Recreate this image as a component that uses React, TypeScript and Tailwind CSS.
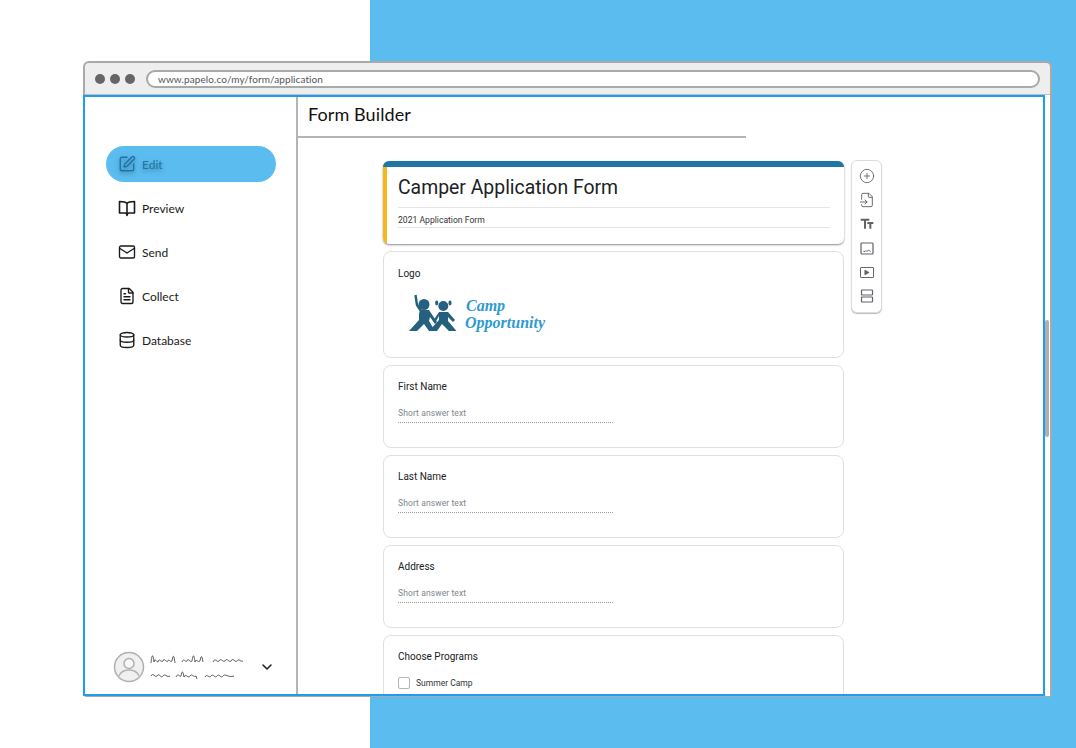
import { ChevronDown, CirclePlus, Database, FileInput, FileText, Mail, Play, SquarePen } from "lucide-react";
import { MdTextFields } from "react-icons/md";

const hand = "font-['Lato','Noto_Sans',sans-serif]";

function BookIcon() {
  return (
    <svg width="18" height="18" viewBox="0 0 18 18" fill="none" stroke="currentColor" strokeWidth="1.6" strokeLinejoin="round">
      <path d="M9 4.500C8 3 6 2.500 1.500 2.500V14H7c1 0 2 .6 2 2.500 0-1.900 1-2.500 2-2.500h5.500V2.500C12 2.500 10 3 9 4.500ZM9 4.500V16.500" />
    </svg>
  );
}

const navItems = [
  { label: "Preview", icon: <BookIcon /> },
  { label: "Send", icon: <Mail size={18} strokeWidth={1.8} /> },
  { label: "Collect", icon: <FileText size={18} strokeWidth={1.8} /> },
  { label: "Database", icon: <Database size={18} strokeWidth={1.8} /> },
];

function Scribble({ d, w }: { d: string; w: number }) {
  return (
    <svg width={w} height="14" viewBox={`0 0 ${w} 14`} fill="none" stroke="#333" strokeWidth="0.8">
      <path d={d} />
    </svg>
  );
}

function Sidebar() {
  return (
    <aside className="w-[213px] shrink-0 border-r-2 border-[#b4b4b4] flex flex-col">
      <nav className="pt-[49px] pl-[21px] pr-[20px] flex flex-col gap-2">
        <div className="h-[36px] rounded-[18px] bg-[#5bbdef] flex items-center pl-[12px] gap-[6px] text-[#2372a0]">
          <SquarePen size={18} strokeWidth={1.8} className="drop-shadow-[0_2px_2px_rgba(20,80,120,0.6)]" />
          <span className={`${hand} text-[12px] pt-[2px] drop-shadow-[0_2px_2px_rgba(20,80,120,0.6)]`}>Edit</span>
        </div>
        {navItems.map(({ label, icon }) => (
          <div key={label} className="h-[36px] flex items-center pl-[12px] gap-[6px] text-[#1a1a1a]">
            {icon}
            <span className={`${hand} text-[12px] pt-[2px]`}>{label}</span>
          </div>
        ))}
      </nav>
      <div className="mt-auto pb-[11px] pl-[28px] flex items-center">
        <svg width="32" height="32" viewBox="0 0 32 32" fill="none">
          <circle cx="16" cy="16" r="14.500" fill="#f0f0f0" stroke="#b0b0b0" strokeWidth="1.500" />
          <circle cx="16" cy="12.500" r="5" fill="#f8f8f8" stroke="#b0b0b0" strokeWidth="1.500" />
          <path d="M6 25c2-5 6-6 10-6s8 1 10 6" stroke="#b0b0b0" strokeWidth="1.500" />
        </svg>
        <div className="ml-[5px] w-[96px] flex flex-col gap-[1px]">
          <Scribble w={96} d="M1 10 C2 0 3 1 4 9 C5 4 6 9 8 9 C9 4 11 10 13 8 C14 4 16 10 18 8 C19 5 20 10 22 8 C23 1 24 2 25 10 M32 9 C34 4 35 10 37 8 C38 4 40 10 42 8 C43 1 44 1 45 9 C46 5 48 10 50 8 C51 2 52 2 53 9 M63 9 C65 4 67 10 69 8 C71 4 73 10 75 8 C77 4 79 10 81 8 C83 4 85 10 87 8 C89 5 90 9 93 8" />
          <Scribble w={96} d="M1 8 C3 4 5 10 7 8 C9 4 11 11 13 8 C15 5 17 10 20 8 M26 9 C28 4 30 10 31 8 C32 2 33 3 34 9 C36 5 38 11 40 8 C42 5 44 10 46 8 L47 11 M55 9 C57 5 59 11 61 8 C63 5 65 11 67 8 C69 5 71 11 73 8 C75 5 78 10 84 8" />
        </div>
        <ChevronDown size={16} strokeWidth={2.4} className="ml-[13px] text-[#222]" />
      </div>
    </aside>
  );
}

const label = "font-['Roboto',sans-serif] text-[10px] leading-[16px] text-[#202124]";

function FieldCard({ title }: { title: string }) {
  return (
    <section className="h-[83px] rounded-[8px] border border-[#e0e0e0] bg-white px-[14px] pt-[13px]">
      <p className={label}>{title}</p>
      <p className="mt-[12px] w-[215px] border-b border-dotted border-[#9a9a9a] pb-[3px] font-['Roboto',sans-serif] text-[8.500px] leading-[12px] tracking-[0.1px] text-[#80868b]">
        Short answer text
      </p>
    </section>
  );
}

function CampLogo() {
  return (
    <div className="mt-[12px] ml-[11px] flex items-center gap-[4px]">
      <svg width="52" height="40" viewBox="0 0 52 40" fill="#25607f">
        <circle cx="15" cy="10.500" r="5.500" />
        <circle cx="34.300" cy="12" r="5" />
        <ellipse cx="27.700" cy="9" rx="1.600" ry="2.400" />
        <ellipse cx="41" cy="9" rx="1.600" ry="2.400" />
        <path d="M6.500 1 8 11l4 6" fill="none" stroke="#25607f" strokeWidth="2.400" />
        <path d="M11 16h9l8 12-2 2-5-7-1 4 6 10h-6l-5-7-7 7H0l10-11v-6z" />
        <path d="M30 18h9l7 8-2 2-5-5v4l8.500 10H40l-7-7-5 7h-8l10-11v-4l-4 7-2-2z" />
      </svg>
      <div className="font-['Liberation_Serif',serif] italic font-bold text-[#2e9ad0] leading-[17px]">
        <p className="text-[16px] pl-[1px]">Camp</p>
        <p className="text-[16px]">Opportunity</p>
      </div>
    </div>
  );
}

function Toolbar() {
  return (
    <div className="ml-[7px] -mt-[1px] w-[31px] h-[153px] shrink-0 rounded-[6px] border border-[#dcdcdc] shadow-[0_1px_1px_#bbb] bg-white flex flex-col items-center pt-[7px] gap-[8px] text-[#5f6368]">
      <CirclePlus size={16} strokeWidth={1.300} />
      <FileInput size={16} strokeWidth={1.400} />
      <MdTextFields size={16} />
      <span className="h-[16px] flex items-center">
        <svg width="14" height="13" viewBox="0 0 14 13" fill="none" stroke="currentColor" strokeWidth="1.200">
          <rect x="1" y="1" width="12" height="11" rx="1" />
          <path d="M3.500 9.500H5l1-1 1 1 1.500-1.500 2 1.500" strokeWidth="1" />
        </svg>
      </span>
      <span className="h-[16px] flex items-center">
        <span className="w-[14px] h-[11px] rounded-[1px] border border-[#666] flex items-center justify-center">
          <Play size={7} fill="currentColor" strokeWidth={0} />
        </span>
      </span>
      <svg width="14" height="16" viewBox="0 0 14 16" fill="none" stroke="currentColor" strokeWidth="1.200">
        <rect x="1.500" y="2" width="11" height="5" rx="0.500" />
        <rect x="1.500" y="9" width="11" height="5" rx="0.500" />
      </svg>
    </div>
  );
}

function Builder() {
  return (
    <main className="flex-1 min-w-0 flex flex-col overflow-hidden">
      <header className="shrink-0 h-[41px] border-b-2 border-[#b4b4b4] w-[448px] pl-[10px] pb-[4px] flex items-center">
        <h1 className={`${hand} text-[18px] tracking-[0.1px] text-[#111]`}>Form Builder</h1>
      </header>
      <div className="pl-[85px] pt-[23px] flex items-start">
        <div className="w-[461px] flex flex-col gap-[7px]">
          <section className="h-[83px] rounded-[6px] bg-white shadow-[0_1px_2px_#8a8a9a] overflow-hidden border-t-[6px] border-[#1f76a3]">
            <div className="h-full border-l-[4px] border-[#f7b718] pl-[11px] pr-[14px]">
              <h2 className="pt-[7px] font-['Roboto',sans-serif] text-[19.400px] leading-[28px] text-[#202124] border-b border-[#e4e4e4] pb-[5px]">
                Camper Application Form
              </h2>
              <p className="pt-[6px] pb-[1px] font-['Roboto',sans-serif] text-[8.600px] leading-[12px] text-[#333] border-b border-[#e4e4e4]">
                2021 Application Form
              </p>
            </div>
          </section>
          <section className="h-[107px] rounded-[8px] border border-[#e0e0e0] bg-white px-[14px] pt-[14px]">
            <p className={label}>Logo</p>
            <CampLogo />
          </section>
          <FieldCard title="First Name" />
          <FieldCard title="Last Name" />
          <FieldCard title="Address" />
          <section className="h-[90px] rounded-[8px] border border-[#e0e0e0] bg-white px-[14px] pt-[13px]">
            <p className={label}>Choose Programs</p>
            <div className="mt-[12px] flex items-center gap-[6px]">
              <span className="w-[12px] h-[12px] rounded-[2px] border border-[#b4b4b4]" />
              <span className="font-['Roboto',sans-serif] text-[8.500px] text-[#333]">Summer Camp</span>
            </div>
          </section>
        </div>
        <Toolbar />
      </div>
    </main>
  );
}

export default function App() {
  return (
    <div className="relative w-[1076px] h-[748px] overflow-hidden flex">
      <div className="w-[370px] bg-white" />
      <div className="flex-1 bg-[#5bbdef]" />
      <div className="absolute left-[83px] top-[61px] w-[969px] h-[636px] rounded-t-[6px] rounded-b-[4px] border-[2px] border-b-[1px] border-[#a9a9a9] bg-[#eeeeee] flex flex-col">
        <div className="shrink-0 h-[32px] flex items-center pl-[10px] pr-[10px] border-b border-[#bdbdbd]">
          <div className="flex gap-[5px]">
            <span className="w-[10px] h-[10px] rounded-full bg-[#666]" />
            <span className="w-[10px] h-[10px] rounded-full bg-[#666]" />
            <span className="w-[10px] h-[10px] rounded-full bg-[#666]" />
          </div>
          <div className={`ml-[11px] flex-1 h-[18px] rounded-full border-[2px] border-[#a9a9a9] bg-white pl-[10px] pt-[1px] flex items-center ${hand} text-[10px] tracking-[0.08px] text-[#555]`}>
            www.papelo.co/my/form/application
          </div>
        </div>
        <div className="flex-1 min-h-0 flex">
          <div className="flex-1 min-w-0 -ml-[2px] border-2 border-[#1f9bf0] bg-white flex overflow-hidden">
            <Sidebar />
            <Builder />
          </div>
          <div className="w-[5px] shrink-0 bg-white pt-[225px]">
            <div className="w-[4px] h-[117px] rounded-[2px] bg-[#b0b0b0]" />
          </div>
        </div>
      </div>
    </div>
  );
}
